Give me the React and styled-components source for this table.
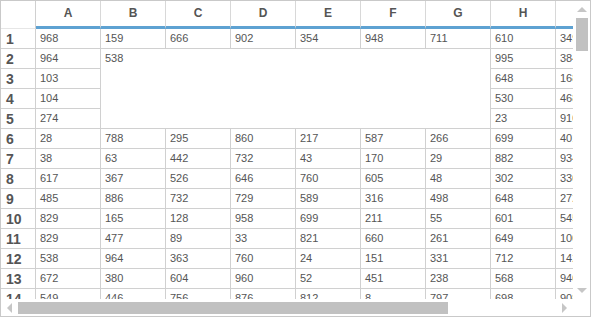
import React from 'react';
import styled, { createGlobalStyle } from 'styled-components';

const GlobalStyle = createGlobalStyle`
    body {
        margin: 0;
        background: #fff;
        font-family: "Liberation Sans", Arial, sans-serif;
    }
`;

const COLS = ['A', 'B', 'C', 'D', 'E', 'F', 'G', 'H', 'I'];

const DATA = [
    [968, 159, 666, 902, 354, 948, 711, 610, 349],
    [964, 538, null, null, null, null, null, 995, 384],
    [103, null, null, null, null, null, null, 648, 168],
    [104, null, null, null, null, null, null, 530, 468],
    [274, null, null, null, null, null, null, 23, 910],
    [28, 788, 295, 860, 217, 587, 266, 699, 401],
    [38, 63, 442, 732, 43, 170, 29, 882, 934],
    [617, 367, 526, 646, 760, 605, 48, 302, 330],
    [485, 886, 732, 729, 589, 316, 498, 648, 272],
    [829, 165, 128, 958, 699, 211, 55, 601, 545],
    [829, 477, 89, 33, 821, 660, 261, 649, 100],
    [538, 964, 363, 760, 24, 151, 331, 712, 142],
    [672, 380, 604, 960, 52, 451, 238, 568, 940],
    [549, 446, 756, 876, 812, 8, 797, 698, 908],
];

const Frame = styled.div`
    width: 591px;
    height: 317px;
    box-sizing: border-box;
    border: 1px solid #c9c9c9;
    display: grid;
    grid-template-columns: 1fr 17px;
    grid-template-rows: 1fr 17px;
    overflow: hidden;
`;

const Viewport = styled.div`
    overflow: hidden;
    min-width: 0;
    min-height: 0;
`;

const Sheet = styled.div`
    display: grid;
    grid-template-columns: 35px repeat(9, 65px);
    grid-template-rows: 28px repeat(14, 20px);
    width: max-content;
`;

const Cell = styled.div`
    box-sizing: border-box;
    border-right: 1px solid #d0d0d0;
    border-bottom: 1px solid #d0d0d0;
    padding: 0 4px;
    font-size: 11px;
    line-height: 19px;
    color: #555;
    white-space: nowrap;
    overflow: hidden;
    background: #fff;
`;

const Merged = styled(Cell)`
    grid-column: 3 / span 6;
    grid-row: 3 / span 4;
`;

const Corner = styled.div`
    box-sizing: border-box;
    border-right: 1px solid #d0d0d0;
    border-bottom: 1px solid #e6e6e6;
`;

const ColHead = styled.div`
    box-sizing: border-box;
    border-right: 1px solid #d8d8d8;
    border-bottom: 3px solid #5ea2d2;
    font-size: 12px;
    font-weight: bold;
    color: #555;
    display: flex;
    align-items: center;
    justify-content: center;
    padding-bottom: 1px;
`;

const RowHead = styled.div`
    box-sizing: border-box;
    border-right: 1px solid #d0d0d0;
    border-bottom: 1px solid #d0d0d0;
    padding-left: 5px;
    font-size: 14px;
    font-weight: bold;
    color: #555;
    line-height: 20px;
`;

const VBar = styled.div`
    display: flex;
    flex-direction: column;
    background: #fff;
`;

const HBar = styled.div`
    display: flex;
    background: #fff;
`;

const ScrollCorner = styled.div`
    background: #fff;
`;

const Arrow = styled.div`
    flex: 0 0 17px;
    height: 17px;
    display: flex;
    align-items: center;
    justify-content: center;
`;

const Track = styled.div`
    flex: 1;
    display: flex;
    flex-direction: ${(p) => (p.$vertical ? 'column' : 'row')};
    padding: ${(p) => (p.$vertical ? '0 2px 0 3px' : '3px 0 2px 0')};
`;

const Thumb = styled.div`
    background: #c1c1c1;
    flex: 0 0 ${(p) => p.$size}px;
`;

const Tri = ({ dir }) => {
    const pts = {
        up: '0,5 5,0 10,5',
        down: '0,0 10,0 5,5',
        left: '5,0 5,10 0,5',
        right: '0,0 0,10 5,5',
    }[dir];
    const vertical = dir === 'up' || dir === 'down';
    return (
        <svg width={vertical ? 10 : 5} height={vertical ? 5 : 10}>
            <polygon points={pts} fill="#c6c6c6" />
        </svg>
    );
};

const App = () => {
    return (
        <>
            <GlobalStyle />
            <Frame>
                <Viewport>
                    <Sheet>
                        <Corner />
                        {COLS.map((c) => (
                            <ColHead key={c}>{c}</ColHead>
                        ))}
                        {DATA.map((row, r) => (
                            <React.Fragment key={r}>
                                <RowHead>{r + 1}</RowHead>
                                {row.map((v, c) => {
                                    if (r === 1 && c === 1) return <Merged key={c}>{v}</Merged>;
                                    if (r >= 1 && r <= 4 && c >= 1 && c <= 6) return null;
                                    return <Cell key={c}>{v}</Cell>;
                                })}
                            </React.Fragment>
                        ))}
                    </Sheet>
                </Viewport>
                <VBar>
                    <Arrow><Tri dir="up" /></Arrow>
                    <Track $vertical>
                        <Thumb $size={33} />
                    </Track>
                    <Arrow><Tri dir="down" /></Arrow>
                </VBar>
                <HBar>
                    <Arrow><Tri dir="left" /></Arrow>
                    <Track>
                        <Thumb $size={430} />
                    </Track>
                    <Arrow><Tri dir="right" /></Arrow>
                </HBar>
                <ScrollCorner />
            </Frame>
        </>
    );
};

export default App;
